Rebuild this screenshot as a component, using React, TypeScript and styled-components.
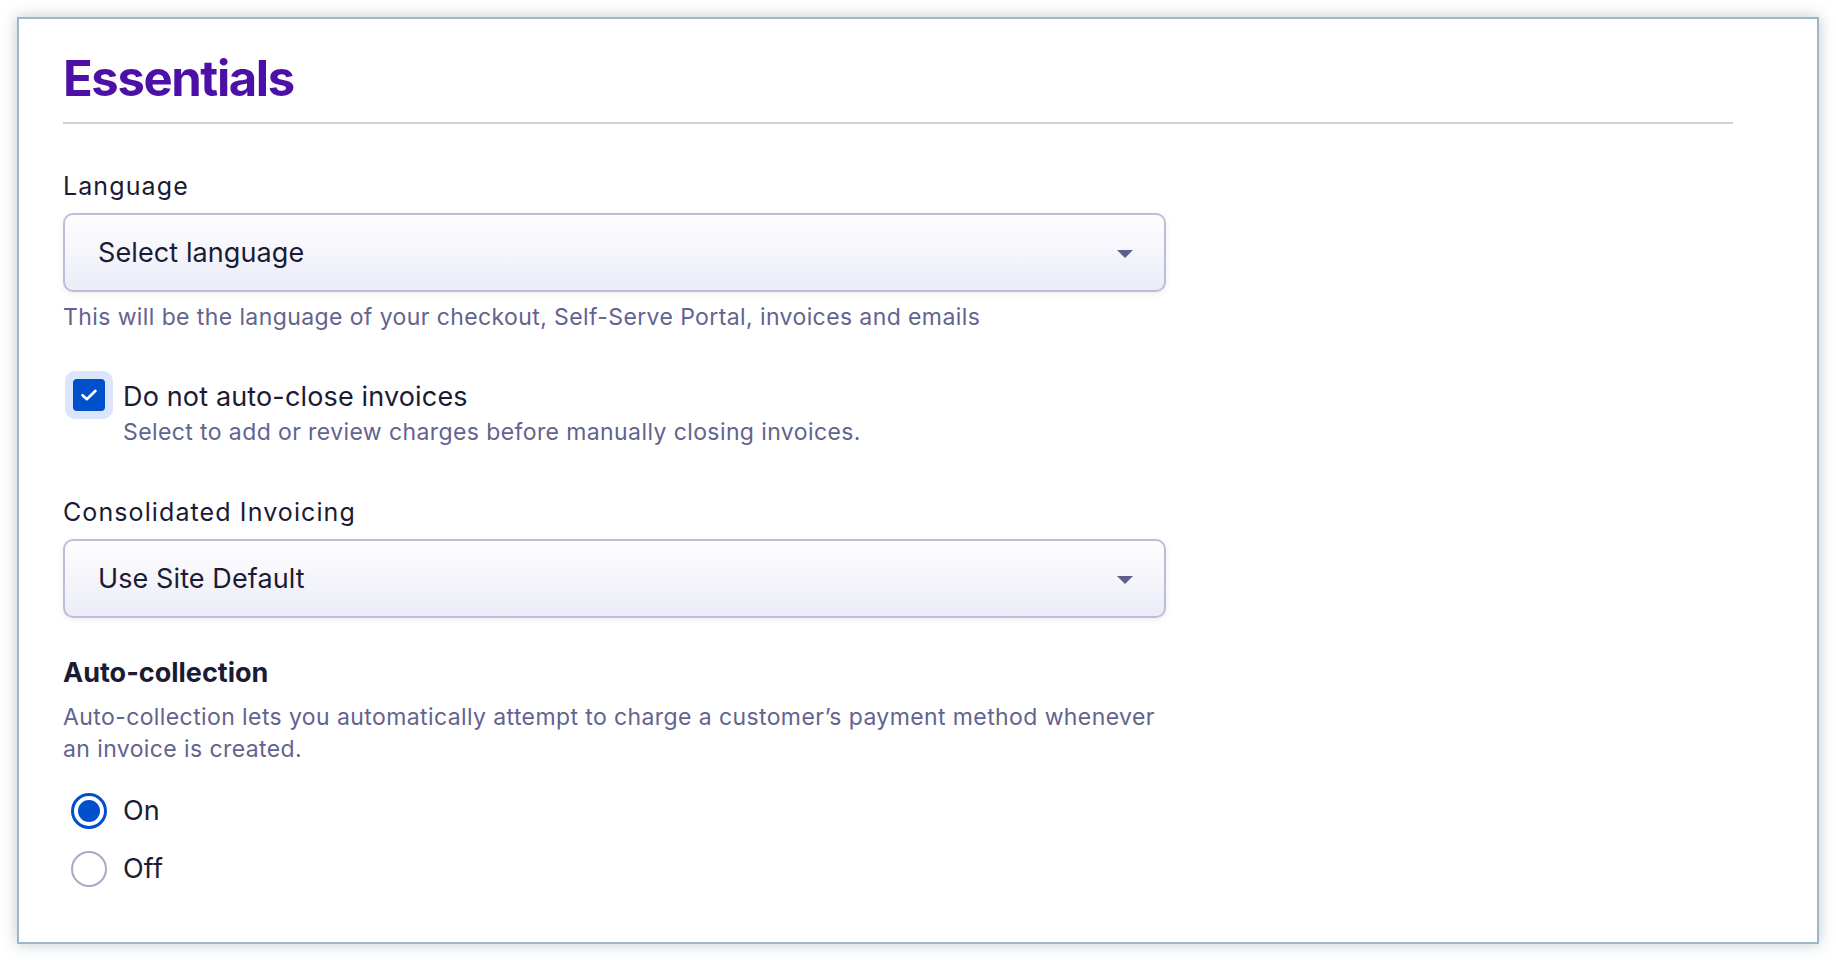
import React from 'react';
import styled, { createGlobalStyle } from 'styled-components';

const GlobalStyle = createGlobalStyle`
  html, body {
    margin: 0;
    padding: 0;
    background: #ffffff;
    font-family: Inter, "Noto Sans", sans-serif;
  }
  * { box-sizing: border-box; }
`;

const Page = styled.div`
  padding: 17px;
`;

const Card = styled.div`
  border: 2px solid #9cb7c6;
  background: #ffffff;
  box-shadow: 0 0 14px rgba(70, 100, 120, 0.35);
  padding: 30px 84px 49px 44px;
`;

const Heading = styled.h1`
  margin: 0;
  font-size: 49px;
  line-height: 60px;
  font-weight: 700;
  color: #4c10a6;
  letter-spacing: -1.4px;
`;

const Divider = styled.hr`
  margin: 13px 0 0;
  border: none;
  height: 2px;
  background: #d2d2d6;
`;

const Field = styled.div<{ $top: number }>`
  margin-top: ${p => p.$top}px;
  max-width: 1103px;
`;

const Label = styled.div`
  font-size: 25px;
  line-height: 32px;
  letter-spacing: 1.1px;
  color: #1b1b33;
`;

const SelectBox = styled.div`
  margin-top: 11px;
  height: 79px;
  display: flex;
  align-items: center;
  justify-content: space-between;
  padding: 0 31px 0 33px;
  border: 2px solid #bdbdd9;
  border-radius: 10px;
  background: linear-gradient(180deg, #fefeff 0%, #ececf8 100%);
  box-shadow: 0 2px 6px rgba(40, 40, 90, 0.08);
  font-size: 27px;
  letter-spacing: 0.1px;
  color: #1b1b33;
`;

const Caret = styled.span`
  width: 0;
  height: 0;
  border-left: 8px solid transparent;
  border-right: 8px solid transparent;
  border-top: 8px solid #5f5f8c;
  margin-top: 2px;
`;

const Helper = styled.div`
  margin-top: 10px;
  font-size: 23px;
  line-height: 30px;
  letter-spacing: 0.4px;
  color: #63638f;
`;

const CheckRow = styled.label`
  margin-top: 39px;
  display: flex;
  align-items: flex-start;
  gap: 10px;
  margin-left: 2px;
`;

const ControlBox = styled.span<{ $halo?: boolean }>`
  flex: none;
  width: 48px;
  height: 48px;
  border-radius: 10px;
  display: flex;
  align-items: center;
  justify-content: center;
  background: ${p => (p.$halo ? '#dbe6fc' : 'transparent')};
`;

const CheckSquare = styled.span`
  width: 32px;
  height: 32px;
  border-radius: 4px;
  background: #0050cc;
  display: flex;
  align-items: center;
  justify-content: center;
`;

const TextCol = styled.span`
  display: flex;
  flex-direction: column;
  padding-top: 8px;
`;

const OptionText = styled.span`
  font-size: 27px;
  line-height: 36px;
  letter-spacing: 0.15px;
  color: #1b1b33;
`;

const SubText = styled.span`
  margin-top: 2px;
  font-size: 23px;
  line-height: 30px;
  letter-spacing: 0.4px;
  color: #63638f;
`;

const SectionTitle = styled.div`
  margin-top: 37px;
  font-size: 27px;
  line-height: 36px;
  font-weight: 700;
  color: #1b1b33;
`;

const Description = styled.p`
  margin: 10px 0 0;
  max-width: 1110px;
  font-size: 23px;
  line-height: 32px;
  letter-spacing: 0.4px;
  color: #63638f;
`;

const RadioGroup = styled.div`
  margin-top: 22px;
  margin-left: 2px;
  display: flex;
  flex-direction: column;
  gap: 10px;
`;

const RadioRow = styled.label`
  display: flex;
  align-items: center;
  gap: 10px;
`;

const RadioCircle = styled.span<{ $checked: boolean }>`
  width: 36px;
  height: 36px;
  border-radius: 50%;
  border: ${p => (p.$checked ? '3px solid #0050cc' : '2.5px solid #a9a9c7')};
  display: flex;
  align-items: center;
  justify-content: center;
  background: #ffffff;
  &::after {
    content: '';
    display: ${p => (p.$checked ? 'block' : 'none')};
    width: 22px;
    height: 22px;
    border-radius: 50%;
    background: #0050cc;
  }
`;

const Select: React.FC<{ value: string }> = ({ value }) => (
  <SelectBox>
    <span>{value}</span>
    <Caret />
  </SelectBox>
);

const Radio: React.FC<{ label: string; checked: boolean }> = ({ label, checked }) => (
  <RadioRow>
    <ControlBox>
      <RadioCircle $checked={checked} />
    </ControlBox>
    <OptionText>{label}</OptionText>
  </RadioRow>
);

const App: React.FC = () => (
  <Page>
    <GlobalStyle />
    <Card>
      <Heading>Essentials</Heading>
      <Divider />

      <Field $top={46}>
        <Label>Language</Label>
        <Select value="Select language" />
        <Helper>This will be the language of your checkout, Self-Serve Portal, invoices and emails</Helper>
      </Field>

      <CheckRow>
        <ControlBox $halo>
          <CheckSquare>
            <svg width="18" height="14" viewBox="0 0 18 14" fill="none">
              <path d="M2.5 7.2 L6.8 11.2 L15.5 2.8" stroke="#ffffff" strokeWidth="2.6" strokeLinecap="round" strokeLinejoin="round" />
            </svg>
          </CheckSquare>
        </ControlBox>
        <TextCol>
          <OptionText>Do not auto-close invoices</OptionText>
          <SubText>Select to add or review charges before manually closing invoices.</SubText>
        </TextCol>
      </CheckRow>

      <Field $top={49}>
        <Label>Consolidated Invoicing</Label>
        <Select value="Use Site Default" />
      </Field>

      <SectionTitle>Auto-collection</SectionTitle>
      <Description>
        Auto-collection lets you automatically attempt to charge a customer’s payment method whenever an invoice is created.
      </Description>
      <RadioGroup>
        <Radio label="On" checked />
        <Radio label="Off" checked={false} />
      </RadioGroup>
    </Card>
  </Page>
);

export default App;
